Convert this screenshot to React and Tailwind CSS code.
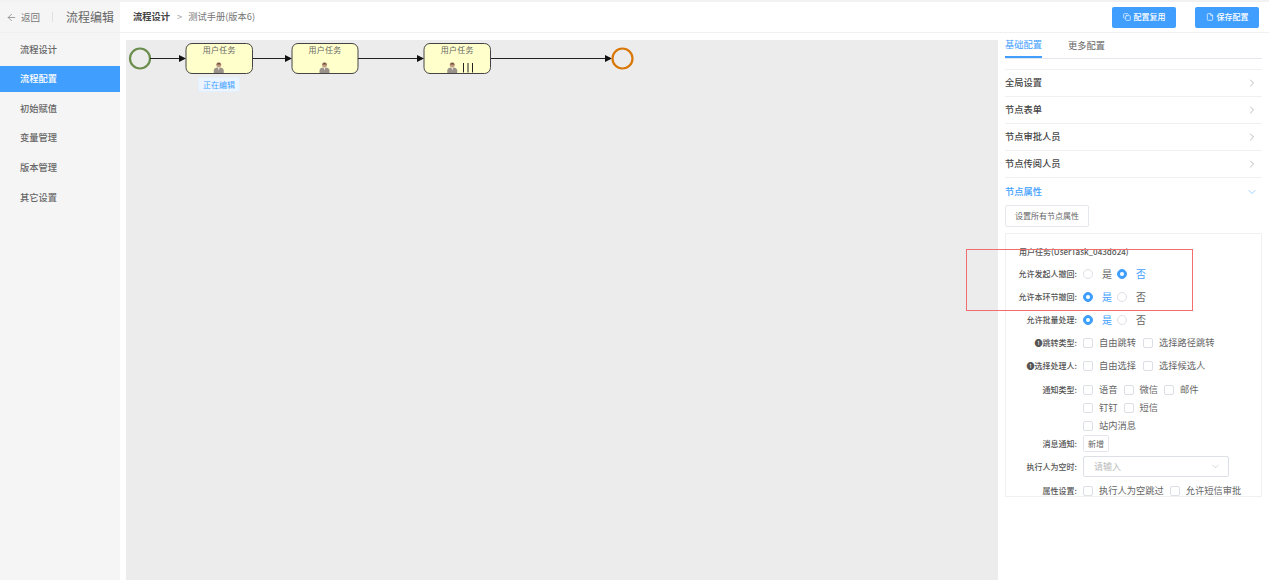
import React from 'react';
import { ArrowLeft, ChevronDown, ChevronRight, Copy, File } from 'lucide-react';

const font = { fontFamily: '"Noto Sans CJK SC", "Noto Sans", sans-serif' };

const menu = ['流程设计', '流程配置', '初始赋值', '变量管理', '版本管理', '其它设置'];
const sections = ['全局设置', '节点表单', '节点审批人员', '节点传阅人员'];

const Radio = ({ checked, label, className = '' }) => (
  <span className={`flex items-center ${className}`}>
    <span className={`flex h-[10px] w-[10px] items-center justify-center rounded-full border ${checked ? 'border-[#409eff] bg-[#409eff]' : 'border-[#dcdfe6] bg-white'}`}>
      {checked && <span className="h-[4px] w-[4px] rounded-full bg-white" />}
    </span>
    <span className={`ml-[9px] text-[10px] ${checked ? 'text-[#409eff]' : 'text-[#666]'}`}>{label}</span>
  </span>
);

const RadioRow = ({ label, value }) => (
  <Row label={label}>
    <Radio checked={value} label="是" />
    <Radio checked={!value} label="否" className="ml-[5px]" />
  </Row>
);

const Check = ({ label, className = '' }) => (
  <span className={`flex items-center ${className}`}>
    <span className="h-[10px] w-[10px] rounded-[2px] border border-[#dcdfe6] bg-white" />
    <span className="ml-[6px] text-[9.25px] text-[#666]">{label}</span>
  </span>
);

const Row = ({ label, children, className = 'h-[23px]' }) => (
  <div className={`flex items-center ${className}`}>
    <span className="w-[71px] shrink-0 whitespace-nowrap text-right text-[8px] font-medium text-[#555]">{label}</span>
    <div className="ml-[6px] flex items-center">{children}</div>
  </div>
);

const Person = ({ x }) => (
  <g transform={`translate(${x} 62)`}>
    <circle cx="5" cy="2.8" r="2.5" fill="#c49a7c" />
    <path d="M2.5 2.6 Q5 -1.2 7.5 2.6 Z" fill="#6a5546" />
    <path d="M0 11 L0 8 Q0.5 5.8 3.4 5.4 L6.6 5.4 Q9.5 5.8 10 8 L10 11 Z" fill="#9a928a" />
    <path d="M4 5.4 L5 8.4 L6 5.4 Z" fill="#eee8da" />
  </g>
);

const Task = ({ x, w, multi }) => (
  <g>
    <rect x={x} y="43.5" width={w} height="30" rx="6" fill="#ffffcc" stroke="#444" strokeWidth="1" />
    <text x={x + w / 2} y="53" textAnchor="middle" fontSize="8" letterSpacing="0.3" fill="#666" style={font}>用户任务</text>
    <Person x={x + w / 2 - (multi ? 10 : 5.5)} />
    {multi && <path d={`M${x + 39.5} 63v9.5M${x + 44} 63v9.5M${x + 48.5} 63v9.5`} stroke="#222" strokeWidth="1" />}
  </g>
);

const Arrow = ({ from, to }) => (
  <g>
    <path d={`M${from} 58.5H${to - 6}`} stroke="#222" strokeWidth="1" />
    <path d={`M${to - 7} 55L${to} 58.5L${to - 7} 62Z`} fill="#111" />
  </g>
);

export default function App() {
  return (
    <div className="relative flex h-[580px] w-[1269px] flex-col overflow-hidden bg-white" style={font}>
      <div className="h-[2px] shrink-0 bg-[#f2f2f2]" />
      <header className="flex h-[31px] shrink-0 items-center border-b border-[#f0f0f0]">
        <div className="flex h-full w-[120px] shrink-0 items-center bg-[#f5f5f5] pl-[6px]">
          <ArrowLeft className="h-[11px] w-[11px] text-[#777]" strokeWidth={1.5} />
          <span className="ml-[4px] text-[9.5px] text-[#777]">返回</span>
          <span className="ml-[12px] h-[10px] w-px bg-[#e0e0e0]" />
          <span className="ml-[13px] whitespace-nowrap text-[12px] text-[#666]">流程编辑</span>
        </div>
        <div className="ml-[13px] flex items-center whitespace-nowrap text-[9.25px]">
          <span className="font-bold text-[#444]">流程设计</span>
          <span className="ml-[7px] text-[#aaa]">&gt;</span>
          <span className="ml-[6px] text-[#777]">测试手册(版本6)</span>
        </div>
        <div className="ml-auto mr-[10px] flex items-center gap-[19px]">
          <button className="flex h-[21px] w-[64px] items-center justify-center gap-[3px] rounded-[2px] bg-[#409eff] text-[8px] font-medium text-white">
            <Copy className="h-[8px] w-[8px]" />配置复用
          </button>
          <button className="flex h-[21px] w-[64px] items-center justify-center gap-[3px] rounded-[2px] bg-[#409eff] text-[8px] font-medium text-white">
            <File className="h-[8px] w-[8px]" />保存配置
          </button>
        </div>
      </header>

      <div className="flex min-h-0 flex-1">
        <aside className="flex w-[120px] shrink-0 flex-col gap-[3.6px] bg-[#f5f5f5] pt-[3.5px]">
          {menu.map((item, i) => (
            <div
              key={item}
              className={`flex h-[26px] items-center pl-[20px] text-[9.25px] font-medium ${i === 1 ? 'bg-[#409eff] text-white' : 'text-[#666]'}`}
            >
              {item}
            </div>
          ))}
        </aside>

        <main className="ml-[6px] mt-[7px] w-[872px] shrink-0 bg-[#ececec]">
          <svg width="872" height="120" viewBox="126 40 872 120" className="block">
            <circle cx="140" cy="58.5" r="10" fill="none" stroke="#6b8e4e" strokeWidth="2.2" />
            <Arrow from={150} to={186} />
            <Task x={186} w={66.5} />
            <Arrow from={253} to={292} />
            <Task x={292} w={66} />
            <Arrow from={358} to={424} />
            <Task x={424} w={66.5} multi />
            <Arrow from={491} to={612} />
            <circle cx="622.5" cy="58.5" r="10" fill="none" stroke="#d97706" strokeWidth="2.2" />
          </svg>
        </main>

        <section className="w-[271px] shrink-0 pl-[7px] pr-[7px]">
          <div className="flex h-[26px] items-center border-b border-[#e4e7ed]">
            <span className="relative flex h-full w-[37px] items-center whitespace-nowrap border-b-2 border-[#409eff] text-[9.25px] text-[#409eff]">基础配置</span>
            <span className="ml-[26px] text-[9.25px] text-[#666]">更多配置</span>
          </div>
          <div className="mt-[10px] border-t border-[#f0f0f0]">
            {sections.map((s) => (
              <div key={s} className="flex h-[27px] items-center justify-between border-b border-[#f0f0f0] pr-[4px] text-[9.25px] font-medium text-[#444]">
                {s}
                <ChevronRight className="h-[12px] w-[12px] text-[#777]" strokeWidth={1} />
              </div>
            ))}
            <div className="flex h-[27px] items-center justify-between pr-[4px] text-[9.25px] font-medium text-[#409eff]">
              节点属性
              <ChevronDown className="h-[12px] w-[12px]" strokeWidth={1} />
            </div>
          </div>
          <button className="block h-[22px] w-[84px] rounded-[2px] border border-[#e4e7ed] text-[8px] text-[#666]">设置所有节点属性</button>
          <div className="mt-[6px] h-[264px] border border-[#f0f0f0] pt-[11px]">
            <div className="pl-[13px] text-[8px] font-medium leading-[14px] text-[#555]">用户任务(UserTask_043do24)</div>
            <div className="mt-[3px]">
              <RadioRow label="允许发起人撤回:" value={false} />
              <RadioRow label="允许本环节撤回:" value={true} />
              <RadioRow label="允许批量处理:" value={true} />
              <Row label="❶跳转类型:">
                <Check label="自由跳转" />
                <Check label="选择路径跳转" className="ml-[7px]" />
              </Row>
              <Row label="❶选择处理人:">
                <Check label="自由选择" />
                <Check label="选择候选人" className="ml-[7px]" />
              </Row>
              <Row label="通知类型:" className="mt-[4px] h-[18px]">
                <Check label="语音" />
                <Check label="微信" className="ml-[6px]" />
                <Check label="邮件" className="ml-[6px]" />
              </Row>
              <Row label="" className="h-[18px]">
                <Check label="钉钉" />
                <Check label="短信" className="ml-[6px]" />
              </Row>
              <Row label="" className="h-[18px]">
                <Check label="站内消息" />
              </Row>
              <Row label="消息通知:" className="h-[17px]">
                <button className="h-[17px] w-[26px] rounded-[2px] border border-[#e4e7ed] text-[8px] text-[#666]">新增</button>
              </Row>
              <Row label="执行人为空时:" className="mt-[4px] h-[21px]">
                <div className="flex h-[21px] w-[146px] items-center justify-between rounded-[2px] border border-[#dcdfe6] pl-[10px] pr-[7px] text-[9px] text-[#bbb]">
                  请输入
                  <ChevronDown className="h-[11px] w-[11px] text-[#aaa]" strokeWidth={1} />
                </div>
              </Row>
              <Row label="属性设置:" className="mt-[2px] h-[23px]">
                <Check label="执行人为空跳过" />
                <Check label="允许短信审批" className="ml-[6px]" />
              </Row>
            </div>
          </div>
        </section>
      </div>

      <div className="absolute left-[198px] top-[77px] flex h-[15px] w-[42px] items-center justify-center rounded-[2px] border border-[#e3f0ff] bg-[#ecf5ff] text-[8px] text-[#409eff]">正在编辑</div>
      <div className="pointer-events-none absolute left-[966px] top-[249px] h-[62px] w-[227px] border border-[#f26d6d]" />
    </div>
  );
}
